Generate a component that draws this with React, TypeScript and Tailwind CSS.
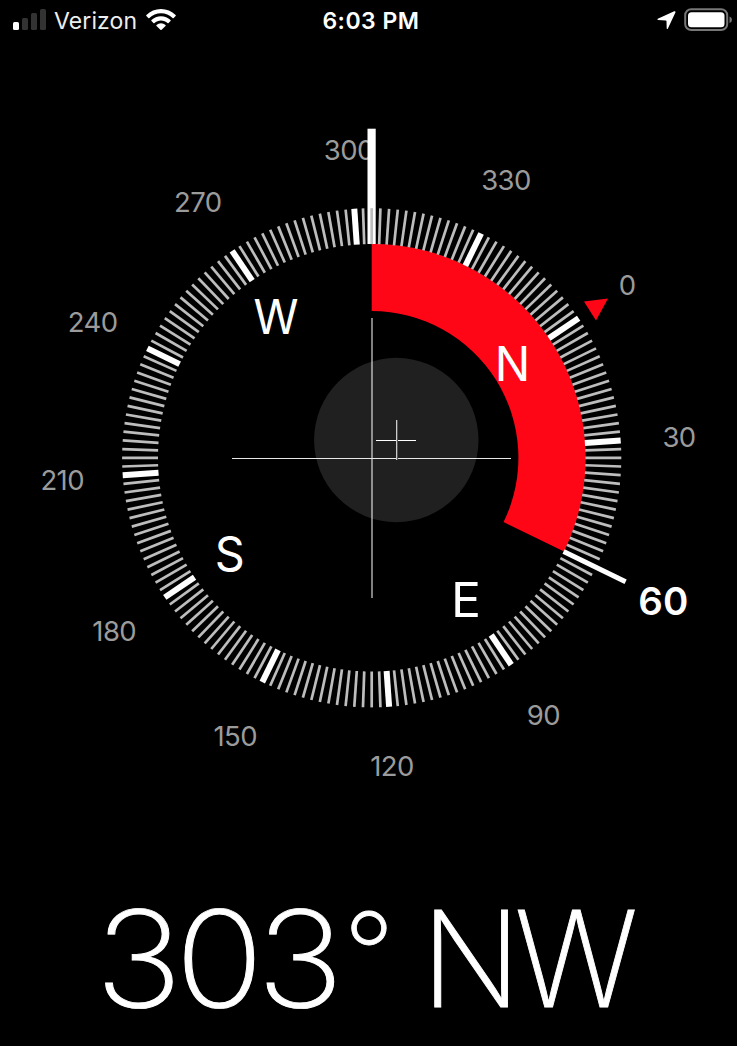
const CX = 371.7;
const CY = 457.8;
const NORTH = 56;

const point = (deg: number, r: number) => {
  const a = (deg * Math.PI) / 180;
  return [CX + r * Math.sin(a), CY - r * Math.cos(a)];
};

const ticks = Array.from({ length: 180 }, (_, i) => i * 2);

const degreeLabels = [
  { text: "300", x: 348.8, y: 159.5 },
  { text: "330", x: 506, y: 190 },
  { text: "0", x: 627, y: 295.3 },
  { text: "30", x: 679, y: 446.5 },
  { text: "90", x: 543.3, y: 724.5 },
  { text: "120", x: 392, y: 776 },
  { text: "150", x: 235.2, y: 745.5 },
  { text: "180", x: 114.2, y: 640.5 },
  { text: "210", x: 62.2, y: 489.5 },
  { text: "240", x: 92.7, y: 332 },
  { text: "270", x: 197.7, y: 211.5 },
];

const cardinals = [
  { text: "N", x: 512.5, y: 380.5, width: 35.5 },
  { text: "E", x: 466, y: 617, width: 30 },
  { text: "S", x: 229.7, y: 571, width: 30 },
  { text: "W", x: 276, y: 334, width: 45 },
];

function Tick({ deg, inner, outer, width, color }: { deg: number; inner: number; outer: number; width: number; color: string }) {
  const [x1, y1] = point(deg, inner);
  const [x2, y2] = point(deg, outer);
  return <line x1={x1} y1={y1} x2={x2} y2={y2} stroke={color} strokeWidth={width} />;
}

function StatusBar() {
  return (
    <header className="grid h-10 grid-cols-3 items-center pl-[13px] pr-[5px] text-[23px] leading-none text-white">
      <div className="flex items-center">
        <svg width="33" height="22" viewBox="0 0 33 22" className="shrink-0">
          <rect x="0" y="13" width="6" height="8" rx="1.5" fill="#fff" />
          <rect x="9" y="9" width="6" height="12" rx="1.5" fill="#333" />
          <rect x="18" y="4" width="6" height="17" rx="1.5" fill="#333" />
          <rect x="27" y="0" width="6" height="21" rx="1.5" fill="#333" />
        </svg>
        <span className="ml-2 mt-[2px] tracking-[0.1px] text-[#eee]">Verizon</span>
        <svg width="30" height="22" viewBox="0 0 30 22" className="ml-[9px] shrink-0">
          <path d="M15 0C9.400 0 4.200 2.200 .4 5.900Q-.1 6.400 .4 7L2.300 8.900Q2.800 9.400 3.400 8.900C6.500 6 10.500 4.300 15 4.300S23.500 6 26.600 8.900Q27.200 9.400 27.700 8.900L29.600 7Q30.100 6.400 29.600 5.900C25.800 2.200 20.600 0 15 0Z" fill="#fff" />
          <path d="M15 7.200C11.300 7.200 8 8.600 5.500 10.900Q4.900 11.500 5.500 12L7.400 13.900Q7.900 14.400 8.500 13.900C10.200 12.300 12.500 11.400 15 11.400S19.800 12.300 21.500 13.900Q22.100 14.400 22.600 13.900L24.500 12Q25.100 11.500 24.500 10.900C22 8.600 18.700 7.200 15 7.200Z" fill="#fff" />
          <path d="M15 14.200Q12.400 14.200 10.500 15.900Q10 16.400 10.500 16.900L14.400 20.800Q15 21.400 15.600 20.800L19.500 16.900Q20 16.400 19.500 15.900Q17.600 14.200 15 14.200Z" fill="#fff" />
        </svg>
      </div>
      <div className="mt-[2px] whitespace-nowrap pr-[3px] text-center font-[560] tracking-[0.5px]">6:03 PM</div>
      <div className="-mr-px flex items-center justify-end gap-2">
        <svg width="19" height="19" viewBox="0 0 19 19">
          <path d="M17.200 .3L.8 7.800Q-.2 8.500 1 8.900L8.800 9.600Q9.500 9.700 9.500 10.300L9.700 17.400Q10.200 18.700 10.900 17.500L18.400 1.500Q18.800 -.3 17.200 .3Z" fill="#fff" />
        </svg>
        <svg width="49" height="24" viewBox="0 0 49 24">
          <rect x="1.200" y="1.200" width="42" height="20.800" rx="6" fill="none" stroke="#777" strokeWidth="2" />
          <rect x="4" y="4.200" width="36.500" height="15" rx="3.500" fill="#fff" />
          <path d="M45.500 8.500Q48 9.200 48 11.700T45.500 15Z" fill="#777" />
        </svg>
      </div>
    </header>
  );
}

function Compass() {
  const [x1, y1] = point(0, 214);
  const [x2, y2] = point(116, 214);
  const [x3, y3] = point(116, 146.7);
  const [x4, y4] = point(0, 146.7);
  return (
    <svg width="737" height="840" viewBox="0 40 737 840" className="block shrink-0">
      <circle cx="396.300" cy="440" r="82.200" fill="#202020" />
      <path d={`M${x1} ${y1}A214 214 0 0 1 ${x2} ${y2}L${x3} ${y3}A146.7 146.7 0 0 0 ${x4} ${y4}Z`} fill="#ff0617" />
      <g textAnchor="middle" fill="#9b9b9b" fontSize="27.500" letterSpacing="-0.600">
        {degreeLabels.map((l) => (
          <text key={l.text} x={l.x} y={l.y}>{l.text}</text>
        ))}
      </g>
      <rect x="367.500" y="128.700" width="8.200" height="115.300" fill="#fff" />
      {ticks.map((t) => {
        const major = t % 30 === 0;
        if (t === 60) return <Tick key={t} deg={NORTH + t} inner={213.500} outer={282.500} width={5} color="#fff" />;
        return (
          <Tick key={t} deg={NORTH + t} inner={213.700} outer={249.600} width={major ? 6 : 2.700} color={major ? "#fff" : "#bdbdbd"} />
        );
      })}
      <path d="M584 301.500L608 298.500L596 320.500Z" fill="#ff0617" />
      <rect x="371" y="318" width="2" height="280" fill="#fff" fillOpacity="0.500" />
      <rect x="232" y="458" width="279" height="1" fill="#e8e8e8" />
      <rect x="376" y="440" width="40" height="1" fill="#fff" />
      <rect x="396" y="420" width="1" height="40" fill="#ccc" />
      <rect x="397" y="420" width="1" height="40" fill="#555" />
      <g textAnchor="middle" fill="#fff" fontSize="48">
        {cardinals.map((c) => (
          <text key={c.text} x={c.x} y={c.y} textLength={c.width} lengthAdjust="spacingAndGlyphs">{c.text}</text>
        ))}
      </g>
      <text x="663.300" y="614.500" textAnchor="middle" fill="#fff" fontSize="38.500" fontWeight="600" textLength="50" lengthAdjust="spacingAndGlyphs">60</text>
    </svg>
  );
}

export default function App() {
  return (
    <main className="flex h-[1046px] w-[737px] flex-col overflow-hidden bg-black font-['Inter',sans-serif]">
      <StatusBar />
      <Compass />
      <div className="flex h-[158px] items-center pl-[94.5px] text-[133.5px] font-extralight leading-none text-white [-webkit-text-stroke:0.9px_white]">
        <span className="w-[249px] shrink-0 origin-left scale-x-[1.1] tracking-[-6.5px]">303</span>
        <span className="mb-[15px] w-[77px] shrink-0 text-[112px]">°</span>
        <span className="origin-left scale-x-[0.98] tracking-[-7px]">NW</span>
      </div>
    </main>
  );
}
